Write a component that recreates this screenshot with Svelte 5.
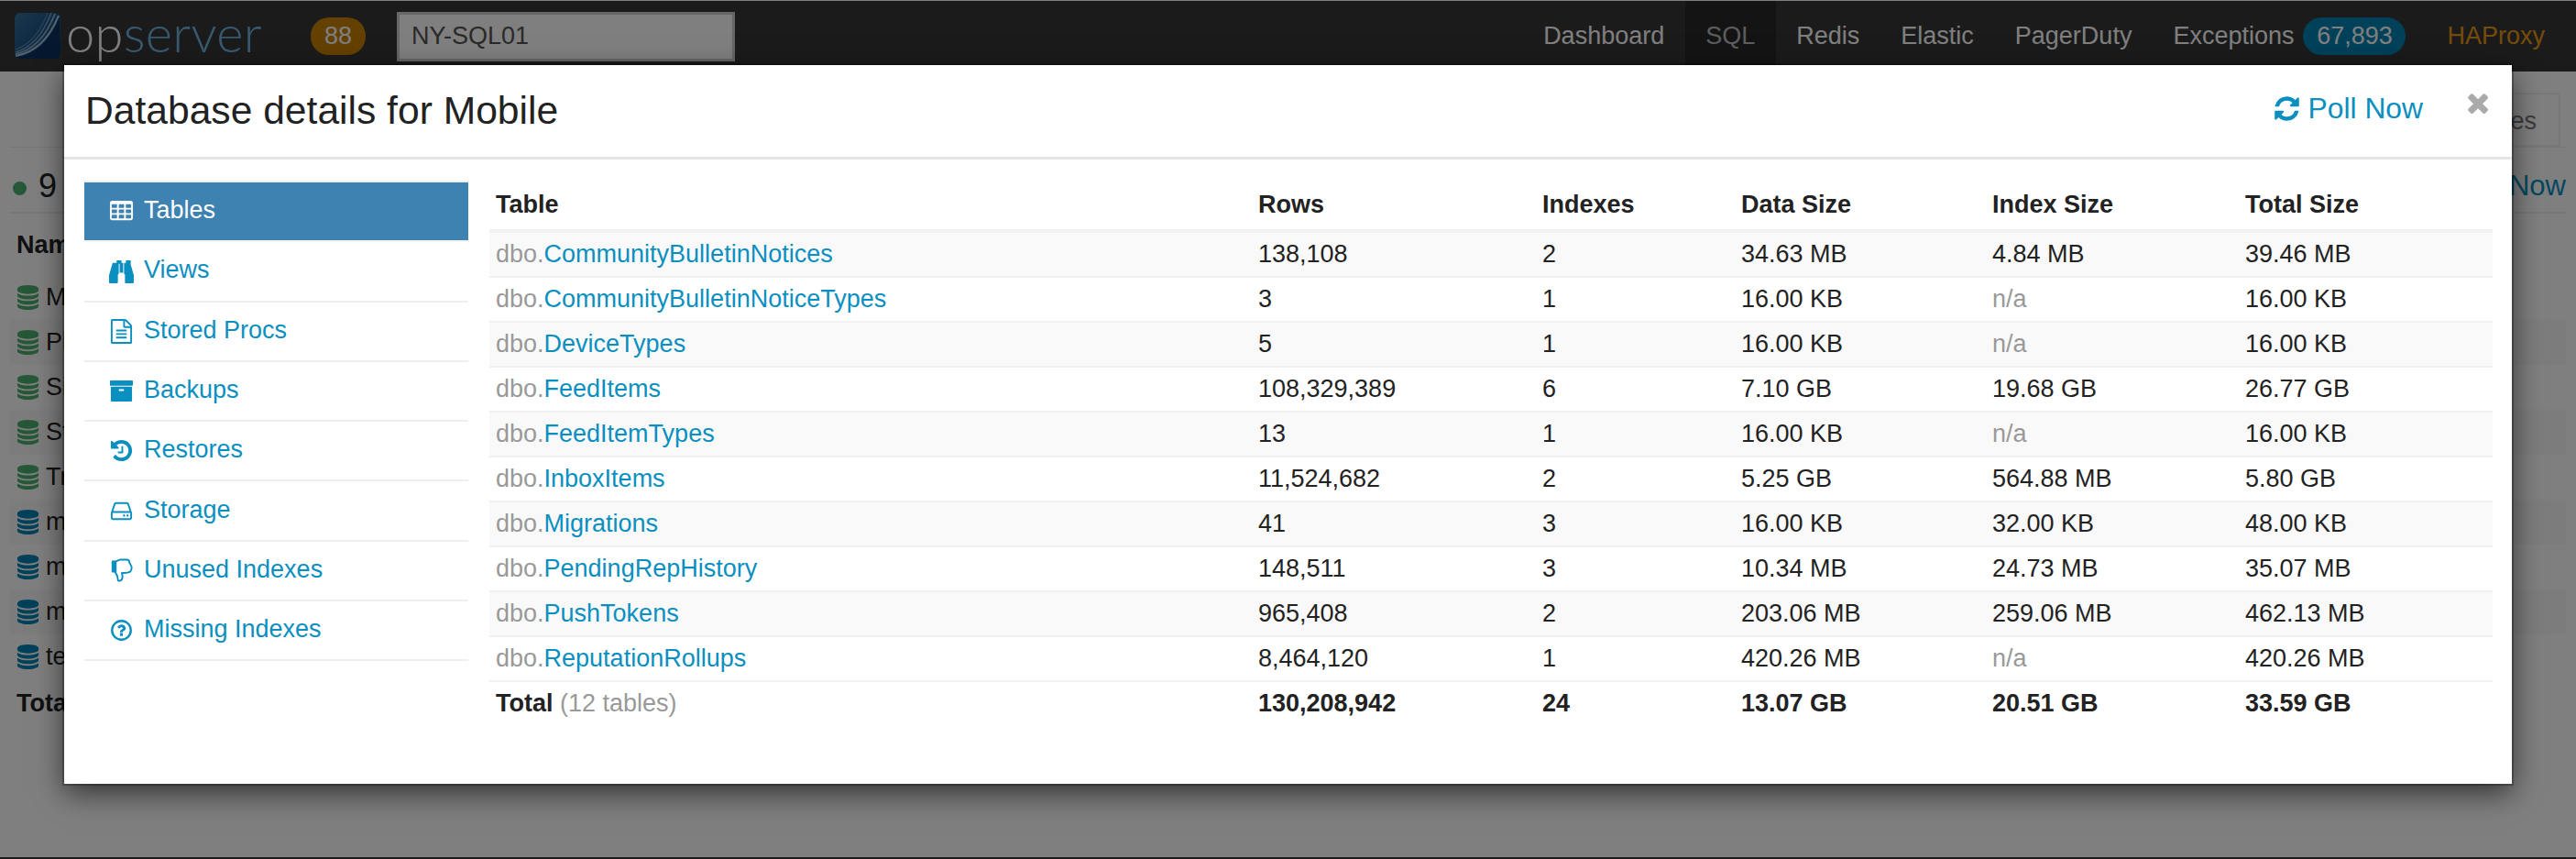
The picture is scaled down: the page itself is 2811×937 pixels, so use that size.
<script>
  const nav = [
    { label: "Dashboard" },
    { label: "SQL", active: true },
    { label: "Redis" },
    { label: "Elastic" },
    { label: "PagerDuty" },
    { label: "Exceptions", badge: "67,893" },
    { label: "HAProxy", warn: true }
  ];

  const icons = {
    table: "M576 1376v-192q0-14-9-23t-23-9h-320q-14 0-23 9t-9 23v192q0 14 9 23t23 9h320q14 0 23-9t9-23zm0-384v-192q0-14-9-23t-23-9h-320q-14 0-23 9t-9 23v192q0 14 9 23t23 9h320q14 0 23-9t9-23zm512 384v-192q0-14-9-23t-23-9h-320q-14 0-23 9t-9 23v192q0 14 9 23t23 9h320q14 0 23-9t9-23zm-512-768v-192q0-14-9-23t-23-9h-320q-14 0-23 9t-9 23v192q0 14 9 23t23 9h320q14 0 23-9t9-23zm512 384v-192q0-14-9-23t-23-9h-320q-14 0-23 9t-9 23v192q0 14 9 23t23 9h320q14 0 23-9t9-23zm512 384v-192q0-14-9-23t-23-9h-320q-14 0-23 9t-9 23v192q0 14 9 23t23 9h320q14 0 23-9t9-23zm-512-768v-192q0-14-9-23t-23-9h-320q-14 0-23 9t-9 23v192q0 14 9 23t23 9h320q14 0 23-9t9-23zm512 384v-192q0-14-9-23t-23-9h-320q-14 0-23 9t-9 23v192q0 14 9 23t23 9h320q14 0 23-9t9-23zm0-384v-192q0-14-9-23t-23-9h-320q-14 0-23 9t-9 23v192q0 14 9 23t23 9h320q14 0 23-9t9-23zm128-320v1088q0 66-47 113t-113 47h-1344q-66 0-113-47t-47-113v-1088q0-66 47-113t113-47h1344q66 0 113 47t47 113z",
    binoculars: "M704 320v768q0 26-19 45t-45 19v576q0 26-19 45t-45 19h-512q-26 0-45-19t-19-45v-512l249-873q7-23 31-23h424zm320 0v704h-256v-704h256zm768 896v512q0 26-19 45t-45 19h-512q-26 0-45-19t-19-45v-576q-26 0-45-19t-19-45v-768h424q24 0 31 23zm-892-1056v224h-352v-224q0-14 9-23t23-9h288q14 0 23 9t9 23zm672 0v224h-352v-224q0-14 9-23t23-9h288q14 0 23 9t9 23z",
    file: "M1596 380q28 28 48 76t20 88v1152q0 40-28 68t-68 28h-1344q-40 0-68-28t-28-68v-1600q0-40 28-68t68-28h896q40 0 88 20t76 48zm-444-244v376h376q-10-29-22-41l-313-313q-12-12-41-22zm384 1528v-1024h-416q-40 0-68-28t-28-68v-416h-768v1536h1280zm-1024-864q0-14 9-23t23-9h704q14 0 23 9t9 23v64q0 14-9 23t-23 9h-704q-14 0-23-9t-9-23v-64zm736 224q14 0 23 9t9 23v64q0 14-9 23t-23 9h-704q-14 0-23-9t-9-23v-64q0-14 9-23t23-9h704zm0 256q14 0 23 9t9 23v64q0 14-9 23t-23 9h-704q-14 0-23-9t-9-23v-64q0-14 9-23t23-9h704z",
    archive: "M1088 832q0-26-19-45t-45-19h-256q-26 0-45 19t-19 45 19 45 45 19h256q26 0 45-19t19-45zm576-192v960q0 26-19 45t-45 19h-1408q-26 0-45-19t-19-45v-960q0-26 19-45t45-19h1408q26 0 45 19t19 45zm64-448v256q0 26-19 45t-45 19h-1536q-26 0-45-19t-19-45v-256q0-26 19-45t45-19h1536q26 0 45 19t19 45z",
    history: "M1664 896q0 156-61 298t-164 245-245 164-298 61q-172 0-327-72.5t-264-204.5q-7-10-6.5-22.5t8.5-20.5l137-138q10-9 25-9 16 2 23 12 73 95 179 147t225 52q104 0 198.5-40.5t163.5-109.5 109.5-163.5 40.5-198.5-40.5-198.5-109.5-163.5-163.5-109.5-198.5-40.5q-98 0-188 35.5t-160 101.5l137 138q31 30 14 69-17 40-59 40h-448q-26 0-45-19t-19-45v-448q0-42 40-59 39-17 69 14l130 129q107-101 244.5-156.5t284.5-55.5q156 0 298 61t245 164 164 245 61 298zm-640-288v448q0 14-9 23t-23 9h-320q-14 0-23-9t-9-23v-64q0-14 9-23t23-9h224v-352q0-14 9-23t23-9h64q14 0 23 9t9 23z",
    hdd: "M1168 1216q0 33-23.5 56.5t-56.5 23.5-56.5-23.5-23.5-56.5 23.5-56.5 56.5-23.5 56.5 23.5 23.5 56.5zm256 0q0 33-23.5 56.5t-56.5 23.5-56.5-23.5-23.5-56.5 23.5-56.5 56.5-23.5 56.5 23.5 23.5 56.5zm112 160v-320q0-13-9.5-22.5t-22.5-9.5h-1216q-13 0-22.5 9.5t-9.5 22.5v320q0 13 9.5 22.5t22.5 9.5h1216q13 0 22.5-9.5t9.5-22.5zm-1230-480h1180l-157-482q-4-13-16-21.5t-26-8.5h-782q-14 0-26 8.5t-16 21.5zm1358 160v320q0 66-47 113t-113 47h-1216q-66 0-113-47t-47-113v-320q0-25 16-75l197-606q17-53 63-86t101-33h782q55 0 101 33t63 86l197 606q16 50 16 75z",
    question: "M1024 1376v-192q0-14-9-23t-23-9h-192q-14 0-23 9t-9 23v192q0 14 9 23t23 9h192q14 0 23-9t9-23zm256-672q0-88-55.5-163t-138.5-116-170-41q-243 0-371 213-15 24 8 42l132 100q7 6 19 6 16 0 25-12 53-68 86-92 34-24 86-24 48 0 85.5 26t37.5 59q0 38-20 61t-68 45q-63 28-115.5 86.5t-52.5 125.5v36q0 14 9 23t23 9h192q14 0 23-9t9-23q0-19 21.5-49.5t54.5-49.5q32-18 49-28.5t46-35 44.5-48 28-60.5 12.5-81z",
    refresh: "M1639 1056q0 5-1 7-64 268-268 434.5t-478 166.5q-146 0-282.5-55t-243.5-157l-129 129q-19 19-45 19t-45-19-19-45v-448q0-26 19-45t45-19h448q26 0 45 19t19 45-19 45l-137 137q71 66 161 102t187 36q134 0 250-65t186-179q11-17 53-117 8-23 30-23h192q13 0 22.5 9.5t9.5 22.5zm25-800v448q0 26-19 45t-45 19h-448q-26 0-45-19t-19-45 19-45l138-138q-148-137-349-137-134 0-250 65t-186 179q-11 17-53 117-8 23-30 23h-199q-13 0-22.5-9.5t-9.5-22.5v-7q65-268 270-434.5t480-166.5q146 0 284 55.5t245 156.5l130-129q19-19 45-19t45 19 19 45z",
    times: "M1490 1322q0 40-28 68l-136 136q-28 28-68 28t-68-28l-294-294-294 294q-28 28-68 28t-68-28l-136-136q-28-28-28-68t28-68l294-294-294-294q-28-28-28-68t28-68l136-136q28-28 68-28t68 28l294 294 294-294q28-28 68-28t68 28l136 136q28 28 28 68t-28 68l-294 294 294 294q28 28 28 68z",
    database: "M896 768q237 0 443-43t325-127v170q0 69-103 128t-280 93.5-385 34.5-385-34.5-280-93.5-103-128v-170q119 84 325 127t443 43zm0 768q237 0 443-43t325-127v170q0 69-103 128t-280 93.5-385 34.5-385-34.5-280-93.5-103-128v-170q119 84 325 127t443 43zm0-384q237 0 443-43t325-127v170q0 69-103 128t-280 93.5-385 34.5-385-34.5-280-93.5-103-128v-170q119 84 325 127t443 43zm0-1152q208 0 385 34.5t280 93.5 103 128v128q0 69-103 128t-280 93.5-385 34.5-385-34.5-280-93.5-103-128v-128q0-69 103-128t280-93.5 385-34.5z"
  };

  const tabs = [
    { label: "Tables", icon: "table", active: true },
    { label: "Views", icon: "binoculars" },
    { label: "Stored Procs", icon: "file" },
    { label: "Backups", icon: "archive" },
    { label: "Restores", icon: "history" },
    { label: "Storage", icon: "hdd" },
    { label: "Unused Indexes", icon: "thumb" },
    { label: "Missing Indexes", icon: "question" }
  ];

  const rows = [
    ["CommunityBulletinNotices", "138,108", "2", "34.63 MB", "4.84 MB", "39.46 MB"],
    ["CommunityBulletinNoticeTypes", "3", "1", "16.00 KB", "n/a", "16.00 KB"],
    ["DeviceTypes", "5", "1", "16.00 KB", "n/a", "16.00 KB"],
    ["FeedItems", "108,329,389", "6", "7.10 GB", "19.68 GB", "26.77 GB"],
    ["FeedItemTypes", "13", "1", "16.00 KB", "n/a", "16.00 KB"],
    ["InboxItems", "11,524,682", "2", "5.25 GB", "564.88 MB", "5.80 GB"],
    ["Migrations", "41", "3", "16.00 KB", "32.00 KB", "48.00 KB"],
    ["PendingRepHistory", "148,511", "3", "10.34 MB", "24.73 MB", "35.07 MB"],
    ["PushTokens", "965,408", "2", "203.06 MB", "259.06 MB", "462.13 MB"],
    ["ReputationRollups", "8,464,120", "1", "420.26 MB", "n/a", "420.26 MB"]
  ];

  const databases = [
    { name: "Mobile", up: true },
    { name: "Platform", up: true },
    { name: "Sites", up: true },
    { name: "Stats", up: true },
    { name: "Tracking", up: true },
    { name: "master" },
    { name: "model" },
    { name: "msdb" },
    { name: "tempdb" }
  ];
</script>

<div class="page">
  <header class="topbar">
    <div class="logo">
      <svg class="mark" viewBox="0 0 50 50" width="50" height="50">
        <defs>
          <linearGradient id="markbg" x1="0" y1="0" x2="1" y2="1">
            <stop offset="0" stop-color="#34709e" />
            <stop offset="0.55" stop-color="#1c5080" />
            <stop offset="1" stop-color="#0a3060" />
          </linearGradient>
        </defs>
        <rect width="50" height="50" rx="6" fill="url(#markbg)" />
        <path d="M2 48Q34 44 49 4V44Q49 50 43 50H7Q3 50 2 48Z" fill="#0b3060" />
        <path d="M1 47Q32 42 48 3" fill="none" stroke="#a0c8e0" stroke-width="2" />
        <path d="M1 45Q29 39 44 1" fill="none" stroke="#80acc8" stroke-width="2" />
        <path d="M1 43Q26 36 40 0" fill="none" stroke="#6c9cc0" stroke-width="1.6" />
        <path d="M1 40Q23 33 36 0" fill="none" stroke="#5488b0" stroke-width="1.2" />
      </svg>
      <span class="wordmark">op<span class="server">server</span></span>
    </div>
    <span class="count">88</span>
    <div class="search">NY-SQL01</div>
    <nav>
      {#each nav as item}
        <a href="#top" class:active={item.active} class:warn={item.warn}>
          {item.label}
          {#if item.badge}<span class="nav-badge">{item.badge}</span>{/if}
        </a>
      {/each}
    </nav>
  </header>

  <main class="content">
    <div class="filter-line"><div class="filter">Databases</div></div>
    <div class="summary">
      <span class="status"><i class="dot"></i>9</span>
      <a href="#top" class="poll-bg">Poll Now</a>
    </div>
    <div class="db-head">Name</div>
    {#each databases as db}
      <div class="db-row">
        <svg class="db-icon" class:up={db.up} viewBox="0 0 1792 1792" width="27" height="27">
          <path d={icons.database} fill="currentColor" />
        </svg>
        {db.name}
      </div>
    {/each}
    <div class="db-total">Total</div>
  </main>
  <footer class="page-foot"></footer>

  <div class="overlay">
    <section class="modal">
      <div class="modal-head">
        <h2>Database details for Mobile</h2>
        <a href="#top" class="poll">
          <svg viewBox="0 0 1792 1792" width="31" height="31"><path d={icons.refresh} fill="currentColor" /></svg>
          Poll Now
        </a>
        <svg class="close" viewBox="130 190 1360 1360" width="25" height="25"><path d={icons.times} fill="currentColor" /></svg>
      </div>

      <div class="modal-body">
        <ul class="tabs">
          {#each tabs as tab}
            <li class:active={tab.active}>
              {#if tab.icon === "thumb"}
                <svg viewBox="0 0 26 28" width="27" height="27">
                  <path d="M3 3.500h4l2-1 3-1h7q3 0 3 3l1.500 3q1.500 2 1 4-.5 3-2 4-2 1-6 1h-3q1 3 .5 6-.5 3-3.500 3-1.500 0-1.500-2 0-3-2-6l-2-3H3z" fill="none" stroke="currentColor" stroke-width="2" stroke-linejoin="round" />
                  <path d="M2 3h5.500v13H2z" fill="currentColor" />
                </svg>
              {:else if tab.icon === "question"}
                <svg viewBox="0 0 1792 1792" width="27" height="27">
                  <circle cx="896" cy="896" r="680" fill="none" stroke="currentColor" stroke-width="160" />
                  <path d={icons.question} fill="currentColor" transform="translate(170 170) scale(0.81)" />
                </svg>
              {:else}
                <svg viewBox="0 0 1792 1792" width="27" height="27"><path d={icons[tab.icon]} fill="currentColor" /></svg>
              {/if}
              <span class="tab-label">{tab.label}</span>
            </li>
          {/each}
        </ul>

        <table>
          <colgroup>
            <col style="width: 832px" /><col style="width: 310px" /><col style="width: 217px" />
            <col style="width: 274px" /><col style="width: 276px" /><col style="width: 277px" />
          </colgroup>
          <thead>
            <tr>
              <th>Table</th><th>Rows</th><th>Indexes</th><th>Data Size</th><th>Index Size</th><th>Total Size</th>
            </tr>
          </thead>
          <tbody>
            {#each rows as row}
              <tr>
                <td><span class="muted">dbo.</span><a href="#top">{row[0]}</a></td>
                {#each row.slice(1) as cell}
                  <td class:muted={cell === "n/a"}>{cell}</td>
                {/each}
              </tr>
            {/each}
          </tbody>
          <tfoot>
            <tr>
              <td><b>Total</b> <span class="muted">(12 tables)</span></td>
              <td><b>130,208,942</b></td>
              <td><b>24</b></td>
              <td><b>13.07 GB</b></td>
              <td><b>20.51 GB</b></td>
              <td><b>33.59 GB</b></td>
            </tr>
          </tfoot>
        </table>
      </div>
    </section>
  </div>
</div>

<style>
  :global(body) {
    margin: 0;
    font-family: "Liberation Sans", Arial, sans-serif;
    font-size: 27px;
    color: #222;
    background: #fff;
  }
  a {
    color: #0a8fc0;
    text-decoration: none;
  }

  .page {
    position: relative;
    height: 937px;
    overflow: hidden;
    display: flex;
    flex-direction: column;
  }

  /* page behind the dialog */
  .topbar {
    height: 77px;
    border-top: 1px solid #fff;
    background: #363636;
    display: flex;
    align-items: center;
    flex: none;
  }
  .logo {
    display: flex;
    align-items: center;
    margin-left: 16px;
    width: 323px;
  }
  .mark {
    flex: none;
    margin-top: -1px;
  }
  .wordmark {
    font-family: Lato, sans-serif;
    font-weight: 300;
    font-size: 56px;
    line-height: 60px;
    margin-left: 6px;
    margin-top: -8px;
    color: #fff;
    letter-spacing: 0.3px;
  }
  .server {
    color: #70b4e0;
  }
  .count {
    width: 60px;
    height: 41px;
    border-radius: 20px;
    background: #c88200;
    color: #fff;
    text-align: center;
    line-height: 41px;
    flex: none;
  }
  .search {
    margin-left: 34px;
    width: 369px;
    height: 54px;
    box-sizing: border-box;
    border: 3px solid #ccc;
    background: #fff;
    color: #555;
    padding-left: 13px;
    line-height: 46px;
    flex: none;
  }
  nav {
    margin-left: auto;
    margin-right: 11.5px;
    display: flex;
    height: 77px;
  }
  nav a {
    color: #fff;
    padding: 0 22.5px;
    display: flex;
    align-items: center;
  }
  nav a.active {
    background: #282828;
    color: #bbb;
  }
  nav a.warn {
    color: #e89818;
  }
  .nav-badge {
    margin-left: 10px;
    width: 112px;
    height: 41px;
    border-radius: 21px;
    background: #0082b4;
    text-align: center;
    line-height: 41px;
  }

  .content {
    flex: 1;
    padding: 0 11px;
  }
  .filter-line {
    display: flex;
    justify-content: flex-end;
    padding-top: 23px;
    padding-right: 6px;
  }
  .filter {
    height: 59px;
    box-sizing: border-box;
    border: 2px solid #f0f0f0;
    padding: 0 24px;
    line-height: 58px;
    color: #777;
  }
  .summary {
    height: 56px;
    padding-top: 14px;
    border-top: 1px solid #eee;
    border-bottom: 2px solid #eee;
    display: flex;
    justify-content: space-between;
    align-items: center;
    font-size: 36px;
  }
  .status {
    display: flex;
    align-items: center;
  }
  .dot {
    width: 15px;
    height: 15px;
    border-radius: 50%;
    background: #4cb070;
    margin: 4px 13px 0 3px;
  }
  .poll-bg {
    font-size: 31px;
  }
  .db-head,
  .db-total {
    font-weight: bold;
    padding-left: 7px;
    display: flex;
    align-items: center;
  }
  .db-head {
    height: 67px;
    padding-top: 2px;
    box-sizing: border-box;
  }
  .db-row {
    height: 49px;
    display: flex;
    align-items: center;
    padding-left: 6px;
    gap: 6px;
  }
  .db-row:nth-of-type(odd) {
    background: #f9f9f9;
  }
  .db-icon {
    color: #0082b4;
  }
  .db-icon.up {
    color: #4cb070;
  }
  .db-total {
    height: 49px;
    padding-top: 3px;
    box-sizing: border-box;
  }
  .page-foot {
    height: 2px;
    background: #363636;
    flex: none;
  }

  /* dialog */
  .overlay {
    position: absolute;
    inset: 0;
    background: rgba(0, 0, 0, 0.5);
  }
  .modal {
    margin: 71px 0 0 70px;
    width: 2671px;
    height: 784px;
    background: #fff;
    box-shadow: 0 0 0 2px rgba(0, 0, 0, 0.25), 0 10px 30px rgba(0, 0, 0, 0.6);
  }
  .modal-head {
    height: 100px;
    border-bottom: 3px solid #e5e5e5;
    display: flex;
    align-items: center;
    padding-left: 23px;
  }
  h2 {
    margin: -2px 0 0;
    font-weight: normal;
    font-size: 42.6px;
    color: #222;
  }
  .poll {
    margin-left: auto;
    font-size: 31.8px;
    display: flex;
    align-items: center;
    gap: 8px;
    margin-top: -5px;
  }
  .close {
    color: #aaa;
    margin: -19px 26px 0 46px;
  }
  .modal-body {
    display: flex;
    gap: 23px;
    padding: 23px 21px 0 22px;
  }
  .tabs {
    list-style: none;
    margin: 0;
    padding: 0;
    width: 419px;
    flex: none;
    border-top: 2px solid #eee;
    align-self: flex-start;
  }
  .tabs li {
    height: 65.3px;
    box-sizing: border-box;
    border-bottom: 2px solid #eee;
    display: flex;
    align-items: center;
    gap: 11px;
    padding-left: 27px;
    color: #0a8fc0;
  }
  .tab-label {
    margin-top: -2px;
  }
  .tabs li.active {
    background: #3d82b0;
    color: #fff;
    border-bottom-color: #f4f4f4;
  }
  table {
    width: 2186px;
    table-layout: fixed;
    border-collapse: collapse;
    align-self: flex-start;
  }
  th {
    text-align: left;
    padding: 0 7px;
    height: 53px;
    font-weight: bold;
    border-bottom: 4px solid #f2f2f2;
    color: #222;
  }
  td {
    padding: 0 7px;
    height: 47px;
    border-top: 2px solid #f0f0f0;
    color: #222;
  }
  tbody tr:nth-child(odd) td {
    background: #f9f9f9;
  }
  td.muted,
  .muted {
    color: #999;
  }
</style>
